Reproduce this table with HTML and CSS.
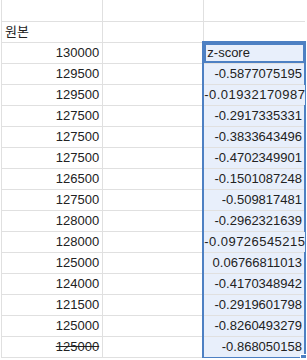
FILE: index.html
```html
<!DOCTYPE html>
<html lang="ko">
  <head>
    <meta charset="UTF-8" />
    <title>원본 z-score</title>
    <link rel="stylesheet" href="styles.css">
  </head>
  <body>
    <div class="sheet">
      <table class="grid">
        <colgroup><col class="col"><col class="col"><col class="col"></colgroup>
        <tr><td></td><td></td><td></td></tr>
        <tr><td class="txt">원본</td><td></td><td></td></tr>
        <tr><td class="num">130000</td><td></td><td class="sel txt active">z-score</td></tr>
        <tr><td class="num">129500</td><td></td><td class="sel num">-0.5877075195</td></tr>
        <tr><td class="num">129500</td><td></td><td class="sel num wide">-0.01932170987</td></tr>
        <tr><td class="num">127500</td><td></td><td class="sel num">-0.2917335331</td></tr>
        <tr><td class="num">127500</td><td></td><td class="sel num">-0.3833643496</td></tr>
        <tr><td class="num">127500</td><td></td><td class="sel num">-0.4702349901</td></tr>
        <tr><td class="num">126500</td><td></td><td class="sel num">-0.1501087248</td></tr>
        <tr><td class="num">127500</td><td></td><td class="sel num">-0.509817481</td></tr>
        <tr><td class="num">128000</td><td></td><td class="sel num">-0.2962321639</td></tr>
        <tr><td class="num">128000</td><td></td><td class="sel num wide">-0.09726545215</td></tr>
        <tr><td class="num">125000</td><td></td><td class="sel num">0.06766811013</td></tr>
        <tr><td class="num">124000</td><td></td><td class="sel num">-0.4170348942</td></tr>
        <tr><td class="num">121500</td><td></td><td class="sel num">-0.2919601798</td></tr>
        <tr><td class="num">125000</td><td></td><td class="sel num">-0.8260493279</td></tr>
        <tr><td class="num struck">125000</td><td></td><td class="sel num">-0.868050158</td></tr>
      </table>

      <!-- selected range outline and its drag handle -->
      <div class="range"></div>
      <div class="handle"></div>
    </div>
  </body>
</html>
```

FILE: styles.css
```css
:root {
  --grid-line: #e0e0e0;
  --sel-blue: #4d80c3;
  --sel-fill: #e8effb;
  --text: #222;
}

* {
  box-sizing: border-box;
}

body {
  margin: 0;
  background: #fff;
  font-family: "Liberation Sans", Arial, "Noto Sans CJK KR", sans-serif;
  font-size: 13px;
  color: var(--text);
  overflow: hidden;
}

.sheet {
  position: relative;
  padding-left: 1px;
}

.grid {
  width: 304px;
  border-collapse: collapse;
  table-layout: fixed;
}

.col {
  width: 101px;
}

.grid td {
  height: 21px;
  padding: 0 3px 3px;
  border-left: 1px solid var(--grid-line);
  border-bottom: 1px solid var(--grid-line);
  white-space: nowrap;
  overflow: hidden;
  vertical-align: bottom;
  line-height: 15px;
}

.txt {
  text-align: left;
}

.num {
  text-align: right;
}

/* numbers too long for the column run right up to the edge */
.grid .wide {
  position: relative;
  z-index: 1;
  overflow: visible;
  padding: 0 0 3px 0;
  text-align: left;
  letter-spacing: 0.45px;
}

.struck {
  text-decoration: line-through;
}

.sel {
  background: var(--sel-fill);
}

.active {
  box-shadow: inset 0 0 0 2px var(--sel-blue);
}

.range {
  position: absolute;
  left: 202px;
  top: 41px;
  width: 104px;
  height: 318px;
  border: 2px solid var(--sel-blue);
  pointer-events: none;
}

.handle {
  position: absolute;
  left: 300px;
  top: 354px;
  width: 7px;
  height: 7px;
  background: var(--sel-blue);
  border: 1px solid #fff;
}
```
